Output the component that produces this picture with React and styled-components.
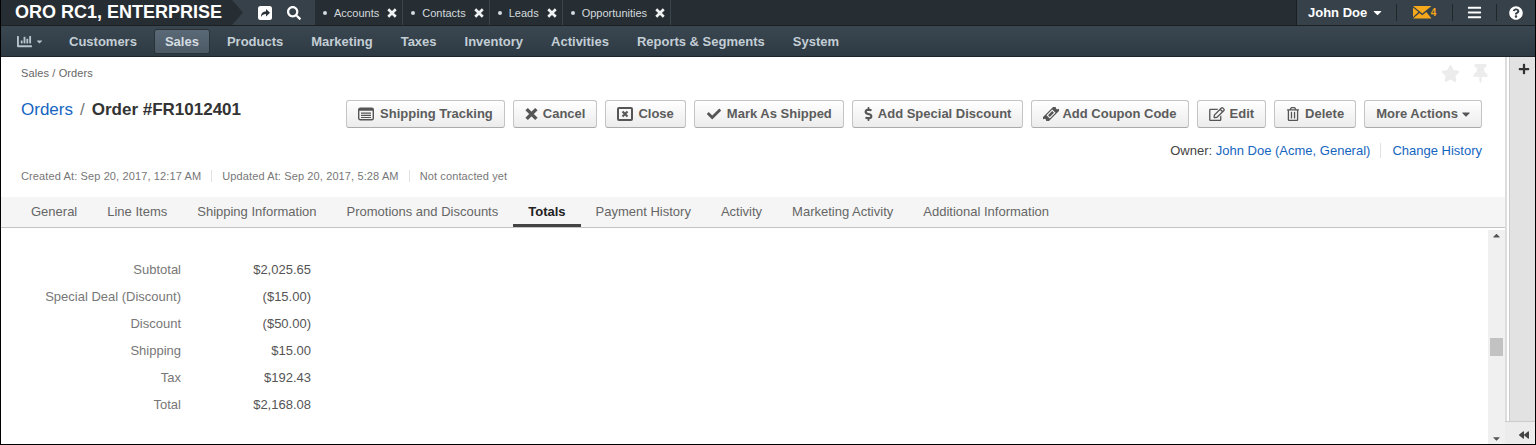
import React from 'react';
import styled, { createGlobalStyle } from 'styled-components';
import {
  FaSearch, FaChartBar, FaCaretDown, FaBars, FaQuestionCircle, FaStar, FaThumbtack,
  FaPlus, FaCheck, FaDollarSign, FaRegEdit, FaRegTrashAlt, FaCaretUp, FaBackward,
} from 'react-icons/fa';

const GlobalStyle = createGlobalStyle`
  html, body {
    margin: 0;
    padding: 0;
    background: #fff;
    font-family: "Liberation Sans", Arial, sans-serif;
    font-size: 13px;
    color: #444;
  }
  * { box-sizing: border-box; }
`;

const Frame = styled.div`
  width: 1536px;
  height: 445px;
  border: solid #000;
  border-width: 0 1px 1px 1px;
  display: flex;
  flex-direction: column;
  overflow: hidden;
`;

const TopBar = styled.header`
  height: 26px;
  flex: none;
  display: flex;
  align-items: stretch;
  background: #272e33;
  border-bottom: 1px solid #1b2023;
  color: #fff;
`;

const Brand = styled.div`
  width: 231px;
  padding-left: 14px;
  font-size: 18px;
  font-weight: 700;
  line-height: 25px;
  white-space: nowrap;
`;

const QuickBox = styled.div`
  width: 83px;
  background: #36414a;
  display: flex;
  align-items: center;
  gap: 15px;
  padding-left: 26px;
  font-size: 14px;
  clip-path: polygon(0 0, 100% 0, 100% 100%, 0 100%, 11px 50%);
`;

const PinTabs = styled.div`
  display: flex;
  height: 25px;
`;

const PinTab = styled.div`
  display: flex;
  align-items: center;
  padding: 0 5px 0 8px;
  font-size: 11px;
  color: #d4dade;
  border-right: 1px solid #3a454d;
  white-space: nowrap;

  &::before {
    content: '';
    width: 4px;
    height: 4px;
    border-radius: 50%;
    background: #d4dade;
    margin-right: 7px;
  }

  svg {
    margin-left: 8px;
    width: 10px;
    height: 10px;
    color: #eef1f2;
  }
`;

const TopRight = styled.div`
  margin-left: auto;
  display: flex;
  align-items: center;
  background: #36414a;
  height: 25px;
  border-left: 1px solid #1b2023;
`;

const UserMenu = styled.div`
  width: 100px;
  padding-left: 11px;
  font-size: 13px;
  font-weight: 700;
  display: flex;
  align-items: center;
  gap: 4px;
  border-right: 1px solid #20272b;
  height: 17px;
  white-space: nowrap;
`;

const TopIcon = styled.div`
  width: ${(p) => p.$width}px;
  height: 17px;
  display: flex;
  align-items: center;
  justify-content: center;
  font-size: 14px;
  border-right: ${(p) => (p.$last ? 'none' : '1px solid #20272b')};
`;

const MailCount = styled.span`
  font-size: 10px;
  font-weight: 700;
  color: #f5a81c;
  margin-left: -1px;
`;

const NavBar = styled.nav`
  height: 31px;
  flex: none;
  display: flex;
  align-items: center;
  padding-left: 16px;
  background: linear-gradient(#3a4751, #2e3a43);
  border-bottom: 1px solid #1d2327;
`;

const ChartToggle = styled.div`
  display: flex;
  align-items: center;
  gap: 3px;
  width: 41px;
  color: #b7c3cb;
  font-size: 15px;

  svg:last-child { font-size: 9px; }
`;

const NavItem = styled.a`
  height: 25px;
  line-height: 23px;
  padding: 0 10px;
  margin-right: 6px;
  font-size: 13px;
  font-weight: 700;
  color: #c3ced5;
  border-radius: 3px;
  border: 1px solid transparent;
  white-space: nowrap;

  ${(p) => p.$active && `
    background: linear-gradient(#5a6976, #4c5a66);
    border-color: #2a3238;
    color: #d5dde2;
  `}
`;

const Body = styled.div`
  flex: 1;
  min-height: 0;
  display: flex;
`;

const Main = styled.main`
  flex: 1;
  min-width: 0;
  display: flex;
  flex-direction: column;
`;

const PageHead = styled.div`
  height: 140px;
  flex: none;
  padding: 0 23px 0 20px;
  display: flex;
  flex-direction: column;
`;

const CrumbRow = styled.div`
  height: 38px;
  flex: none;
  display: flex;
  align-items: center;
  justify-content: space-between;
  font-size: 11px;
  letter-spacing: 0.12px;
  color: #666;
  padding-bottom: 6px;
`;

const Favs = styled.div`
  display: flex;
  gap: 11px;
  font-size: 19px;
  color: #ececec;
  margin-right: -8px;
`;

const TitleRow = styled.div`
  display: flex;
  justify-content: space-between;
  align-items: flex-start;
`;

const Title = styled.h1`
  margin: 3px 0 0;
  font-size: 17px;
  font-weight: 700;
  line-height: 24px;
  color: #333;
  white-space: nowrap;

  a { font-weight: 400; color: #1565c0; }
  i { font-style: normal; font-weight: 400; color: #777; margin: 0 7px; }
`;

const Actions = styled.div`
  display: flex;
  gap: 8px;
  margin-top: 5px;
`;

const Btn = styled.button`
  height: 28px;
  padding: 0 11px 1px;
  display: flex;
  align-items: center;
  gap: ${(p) => p.$gap ?? 5}px;
  background: linear-gradient(#fff, #ececec);
  border: 1px solid #c4c4c4;
  border-bottom-color: #aaa;
  border-radius: 3px;
  font-family: inherit;
  font-size: 13px;
  font-weight: 700;
  color: #5c5c5c;
  white-space: nowrap;

  svg {
    width: ${(p) => p.$icon ?? 14}px;
    height: 14px;
    color: #555;
    flex: none;
  }
`;

const OwnerRow = styled.div`
  display: flex;
  justify-content: flex-end;
  align-items: center;
  margin-top: 15px;
  height: 15px;
  font-size: 13px;
  color: #444;

  a { color: #1565c0; }
`;

const OwnerLink = styled.a`
  padding-left: 11px;
  margin-left: 10px;
  border-left: 1px solid #e2e2e2;
`;

const MetaRow = styled.div`
  display: flex;
  align-items: center;
  margin-top: 11px;
  height: 14px;
  font-size: 11px;
  letter-spacing: 0.12px;
  color: #777;
`;

const MetaItem = styled.span`
  padding-right: 10px;
  margin-right: 10px;
  border-right: ${(p) => (p.$last ? 'none' : '1px solid #e2e2e2')};
`;

const Tabs = styled.div`
  height: 31px;
  flex: none;
  display: flex;
  padding-left: 15px;
  background: #f5f5f5;
  border-bottom: 1px solid #c4c4c4;
`;

const Tab = styled.a`
  padding: 0 15px;
  line-height: 30px;
  font-size: 13px;
  color: ${(p) => (p.$active ? '#222' : '#666')};
  font-weight: ${(p) => (p.$active ? 700 : 400)};
  border-bottom: ${(p) => (p.$active ? '3px solid #444' : 'none')};
  height: 30px;
  white-space: nowrap;
`;

const ScrollArea = styled.div`
  flex: 1;
  min-height: 0;
  display: flex;
`;

const Content = styled.div`
  flex: 1;
  padding-top: 28px;
`;

const TotalRow = styled.div`
  display: grid;
  grid-template-columns: 180px 130px;
  height: 27px;
  line-height: 27px;
  font-size: 13px;
`;

const TotalLabel = styled.span`
  text-align: right;
  color: #777;
  white-space: nowrap;
`;

const TotalValue = styled.span`
  text-align: right;
  color: #555;
`;

const Track = styled.div`
  width: 17px;
  flex: none;
  background: #f0f0f0;
  margin-top: 2px;
  display: flex;
  flex-direction: column;
  align-items: center;
  justify-content: space-between;
  position: relative;
  color: #555;
  font-size: 11px;
`;

const Thumb = styled.div`
  position: absolute;
  left: 2px;
  top: 108px;
  width: 13px;
  height: 18px;
  background: #c2c2c2;
`;

const Side = styled.aside`
  width: 30px;
  flex: none;
  display: flex;
  flex-direction: column;
  border-left: 2px solid #ddd;
  background: #fff;
`;

const SideInner = styled.div`
  flex: 1;
  margin-left: 2px;
  background: #e2e2e2;
  border-left: 1px solid #ccc;
  display: flex;
  justify-content: center;
  padding: 6px 0 0 2px;
  font-size: 12px;
  color: #333;
`;

const SideFoot = styled.div`
  height: 23px;
  margin-left: -2px;
  background: #ececec;
  border-top: 1px solid #ccc;
  display: flex;
  align-items: center;
  justify-content: center;
  font-size: 10px;
  color: #444;
  padding: 3px 0 0 7px;
`;

// FontAwesome 4 shapes that the react-icons set no longer has
const ThickX = () => (
  <svg viewBox="0 0 12 12"><path d="M1.5 1.5l9 9M10.5 1.5l-9 9" stroke="currentColor" strokeWidth="3.2" fill="none" /></svg>
);

const ShareBox = () => (
  <svg width="14" height="14" viewBox="0 0 14 14">
    <rect width="14" height="14" rx="2.5" fill="#fff" />
    <path d="M3 11c0-4 2-5.5 5-5.5V3l4 3.8-4 3.8V8C5.800 8 4.200 8.800 3 11z" fill="#2a3238" />
  </svg>
);

const Mail = () => (
  <svg width="19" height="13" viewBox="0 0 19 13">
    <path d="M0 0h18.500l-9.200 7.500z" fill="#f5a81c" />
    <path d="M0 1.500l5.500 4.500L0 11zM0 12.500l6.500-5.600 2.800 2.300 4-3.200 5.200 6.500z" fill="#f5a81c" />
  </svg>
);

const ListBox = () => (
  <svg viewBox="0 0 16 14">
    <rect x="0.7" y="1.200" width="14.600" height="11.600" rx="1.500" fill="none" stroke="currentColor" strokeWidth="1.400" />
    <path d="M0.700 2h14.600v1.800H0.700zM3 5.500h10v1.200H3zM3 7.700h10v1.200H3zM3 9.900h10v1.200H3z" fill="currentColor" />
  </svg>
);

const CloseBox = () => (
  <svg viewBox="0 0 16 14">
    <rect x="1" y="1" width="14" height="12" rx="1" fill="none" stroke="currentColor" strokeWidth="2" />
    <path d="M5.500 4.500l5 5M10.500 4.500l-5 5" stroke="currentColor" strokeWidth="2" fill="none" />
  </svg>
);

const Ticket = () => (
  <svg viewBox="0 0 16 14">
    <g transform="rotate(-45 8 7)">
      <path d="M-1 3.500h18v2a1.500 1.500 0 0 0 0 3v2H-1v-2a1.500 1.500 0 0 0 0-3z" fill="currentColor" />
      <path d="M4.500 5.200h7v3.600h-7z" fill="none" stroke="#f6f6f6" strokeWidth="1.100" />
    </g>
  </svg>
);

const pins = ['Accounts', 'Contacts', 'Leads', 'Opportunities'];
const menu = ['Customers', 'Sales', 'Products', 'Marketing', 'Taxes', 'Inventory', 'Activities', 'Reports & Segments', 'System'];
const tabs = ['General', 'Line Items', 'Shipping Information', 'Promotions and Discounts', 'Totals', 'Payment History', 'Activity', 'Marketing Activity', 'Additional Information'];
const totals = [
  ['Subtotal', '$2,025.65'],
  ['Special Deal (Discount)', '($15.00)'],
  ['Discount', '($50.00)'],
  ['Shipping', '$15.00'],
  ['Tax', '$192.43'],
  ['Total', '$2,168.08'],
];

export default function App() {
  return (
    <>
      <GlobalStyle />
      <Frame>
        <TopBar>
          <Brand>ORO RC1, ENTERPRISE</Brand>
          <QuickBox><ShareBox /><FaSearch /></QuickBox>
          <PinTabs>
            {pins.map((p) => <PinTab key={p}>{p}<ThickX /></PinTab>)}
          </PinTabs>
          <TopRight>
            <UserMenu>John Doe <FaCaretDown /></UserMenu>
            <TopIcon $width={56}><Mail /><MailCount>4</MailCount></TopIcon>
            <TopIcon $width={44}><FaBars size={15} /></TopIcon>
            <TopIcon $width={38} $last><FaQuestionCircle /></TopIcon>
          </TopRight>
        </TopBar>
        <NavBar>
          <ChartToggle><FaChartBar /><FaCaretDown /></ChartToggle>
          {menu.map((m) => <NavItem key={m} $active={m === 'Sales'}>{m}</NavItem>)}
        </NavBar>
        <Body>
          <Main>
            <PageHead>
              <CrumbRow>
                <span>Sales / Orders</span>
                <Favs><FaStar /><FaThumbtack /></Favs>
              </CrumbRow>
              <TitleRow>
                <Title><a>Orders</a><i>/</i>Order #FR1012401</Title>
                <Actions>
                  <Btn $icon={16} $gap={6}><ListBox />Shipping Tracking</Btn>
                  <Btn $icon={13}><ThickX />Cancel</Btn>
                  <Btn $icon={16}><CloseBox />Close</Btn>
                  <Btn $icon={16}><FaCheck />Mark As Shipped</Btn>
                  <Btn $icon={9}><FaDollarSign />Add Special Discount</Btn>
                  <Btn $icon={16} $gap={3}><Ticket />Add Coupon Code</Btn>
                  <Btn $icon={16}><FaRegEdit />Edit</Btn>
                  <Btn $icon={14}><FaRegTrashAlt />Delete</Btn>
                  <Btn $icon={8} $gap={4}>More Actions<FaCaretDown /></Btn>
                </Actions>
              </TitleRow>
              <OwnerRow>
                Owner:&nbsp;<a>John Doe (Acme, General)</a>
                <OwnerLink>Change History</OwnerLink>
              </OwnerRow>
              <MetaRow>
                <MetaItem>Created At: Sep 20, 2017, 12:17 AM</MetaItem>
                <MetaItem>Updated At: Sep 20, 2017, 5:28 AM</MetaItem>
                <MetaItem $last>Not contacted yet</MetaItem>
              </MetaRow>
            </PageHead>
            <Tabs>
              {tabs.map((t) => <Tab key={t} $active={t === 'Totals'}>{t}</Tab>)}
            </Tabs>
            <ScrollArea>
              <Content>
                {totals.map(([label, value]) => (
                  <TotalRow key={label}>
                    <TotalLabel>{label}</TotalLabel>
                    <TotalValue>{value}</TotalValue>
                  </TotalRow>
                ))}
              </Content>
              <Track>
                <FaCaretUp />
                <Thumb />
                <FaCaretDown />
              </Track>
            </ScrollArea>
          </Main>
          <Side>
            <SideInner><FaPlus /></SideInner>
            <SideFoot><FaBackward /></SideFoot>
          </Side>
        </Body>
      </Frame>
    </>
  );
}
